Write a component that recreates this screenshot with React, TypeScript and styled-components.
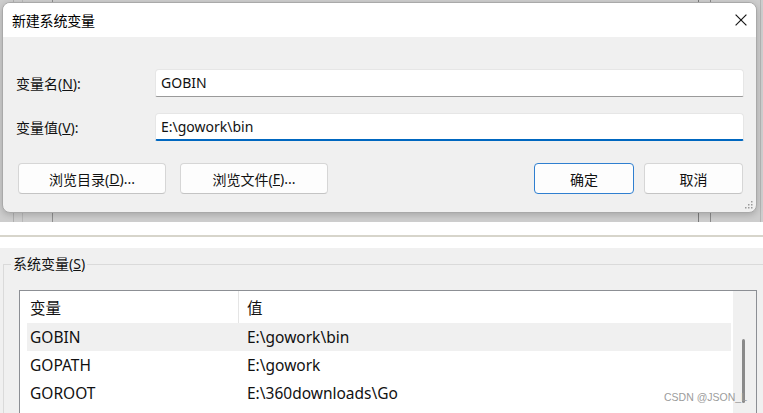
import React, { FC } from 'react'
import styled, { createGlobalStyle, css } from 'styled-components'

const uiFont = `"Noto Sans", "Noto Sans CJK SC", sans-serif`

const GlobalStyle = createGlobalStyle`
  html, body {
    margin: 0;
    padding: 0;
    background: #ffffff;
  }
  body {
    font-family: ${uiFont};
    color: #111111;
  }
  * {
    box-sizing: border-box;
  }
`

const Page = styled.div`
  position: relative;
  width: 763px;
  height: 413px;
  overflow: hidden;
  background: #ffffff;
`

// window content visible behind the dialog
const Backdrop = styled.div`
  height: 222px;
  padding: 2px 6px 9px 2px;
  background-color: #cdcdcd;
  background-image: linear-gradient(
    to right,
    transparent 13px,
    #b0b0b0 13px,
    #b0b0b0 14px,
    transparent 14px,
    transparent 22px,
    #b8b8b8 22px,
    #b8b8b8 23px,
    transparent 23px,
    transparent 52px,
    #8e8e8e 52px,
    #8e8e8e 53px,
    transparent 53px,
    transparent 698px,
    #7a7a7a 698px,
    #7a7a7a 699px,
    transparent 699px,
    transparent 710px,
    #8a8a8a 710px,
    #8a8a8a 711px,
    transparent 711px,
    transparent 760px,
    #b4b4b4 760px,
    #b4b4b4 761px,
    transparent 761px
  );
`

const Dialog = styled.div`
  position: relative;
  height: 100%;
  display: flex;
  flex-direction: column;
  background: #f0f0f0;
  border: 1px solid #a9a9a9;
  border-radius: 8px;
  overflow: hidden;
  box-shadow: 0 2px 6px rgba(0, 0, 0, 0.18);
`

const TitleBar = styled.div`
  height: 34px;
  flex-shrink: 0;
  display: flex;
  align-items: center;
  justify-content: space-between;
  padding: 0 9px 0 9px;
  background: #ffffff;
`

const Title = styled.span`
  font-size: 14px;
  color: #000000;
  letter-spacing: -0.2px;
`

const CloseIcon = styled.svg`
  width: 12px;
  height: 12px;
  display: block;
`

const DialogBody = styled.div`
  flex: 1;
  padding: 32px 12px 0 13px;
`

const FieldGrid = styled.div`
  display: grid;
  grid-template-columns: 139px 1fr;
  row-gap: 16px;
  align-items: center;
`

const FieldLabel = styled.div`
  font-size: 14px;
  color: #111111;
`

const TextBox = styled.div<{ focused?: boolean }>`
  height: 28px;
  display: flex;
  align-items: center;
  padding: 0 5px 2px;
  font-size: 14px;
  color: #111111;
  background: #ffffff;
  border: 1px solid #e6e6e6;
  border-bottom: 1px solid #9a9a9a;
  border-radius: 4px 4px 2px 2px;
  ${({ focused }) =>
    focused &&
    css`
      border-bottom: 2px solid #0067c0;
      padding-bottom: 1px;
    `}
`

const ButtonRow = styled.div`
  margin-top: 22px;
  display: flex;
  justify-content: space-between;
  padding: 0 1px 0 2px;
`

const ButtonGroup = styled.div<{ gap: number }>`
  display: flex;
  gap: ${({ gap }) => gap}px;
`

const Button = styled.div<{ width: number; primary?: boolean }>`
  width: ${({ width }) => width}px;
  height: 31px;
  display: flex;
  align-items: center;
  justify-content: center;
  font-size: 14px;
  color: #111111;
  background: #fdfdfd;
  border: 1px solid #d6d6d6;
  border-bottom-color: #c4c4c4;
  border-radius: 4px;
  ${({ primary }) =>
    primary &&
    css`
      border: 1px solid #2f7fd0;
    `}
`

const Grip = styled.svg`
  position: absolute;
  right: 3px;
  bottom: 3px;
  width: 9px;
  height: 9px;
`

const Divider = styled.div`
  background: #ffffff;
  padding: 13px 0 11px;
`

const DividerLine = styled.div`
  height: 2px;
  background: #d7d5cb;
`

const Panel = styled.div`
  height: 165px;
  background: #f0f0f0;
  padding: 5px 0 0 3px;
  overflow: hidden;
`

const GroupBox = styled.fieldset`
  margin: 0;
  min-width: 0;
  width: 800px;
  padding: 0 0 0 15px;
  border: 1px solid #dadada;
`

const GroupLegend = styled.legend`
  margin-left: -8px;
  padding: 0 2px;
  font-size: 14px;
  line-height: 22px;
  color: #111111;
`

const ListBox = styled.div`
  margin-top: 15px;
  width: 738px;
  height: 140px;
  display: flex;
  background: #ffffff;
  border: 1px solid #8c8f94;
`

const ListContent = styled.div`
  width: 711px;
  padding-left: 7px;
  margin-right: 2px;
`

const Row = styled.div<{ header?: boolean; selected?: boolean }>`
  display: grid;
  grid-template-columns: 212px 1fr;
  align-items: center;
  height: ${({ header }) => (header ? 32 : 28)}px;
  font-size: 15.5px;
  color: #111111;
  background: ${({ selected }) => (selected ? '#f0f0f0' : 'transparent')};
`

const Cell = styled.div<{ first?: boolean; divided?: boolean }>`
  height: 100%;
  display: flex;
  align-items: center;
  padding-left: ${({ first }) => (first ? 3 : 8)}px;
  white-space: nowrap;
  ${({ divided }) =>
    divided &&
    css`
      border-right: 1px solid #e5e5e5;
    `}
`

const ScrollTrack = styled.div`
  width: 23px;
  background: #f0f0f0;
  padding: 48px 0 0 9px;
`

const ScrollThumb = styled.div`
  width: 3px;
  height: 64px;
  border-radius: 2px;
  background: #8a8a8a;
`

const Watermark = styled.div`
  position: absolute;
  right: 16px;
  bottom: 10px;
  font-family: "Liberation Sans", Arial, sans-serif;
  font-size: 10.5px;
  color: #9c9c9c;
`

const variables = [
  { name: 'GOBIN', value: 'E:\\gowork\\bin', selected: true },
  { name: 'GOPATH', value: 'E:\\gowork' },
  { name: 'GOROOT', value: 'E:\\360downloads\\Go' },
]

const App: FC = () => {
  return (
    <Page>
      <GlobalStyle />
      <Backdrop>
        <Dialog>
          <TitleBar>
            <Title>新建系统变量</Title>
            <CloseIcon viewBox="0 0 12 12">
              <path d="M0.6 0.6 L11.4 11.4 M11.4 0.6 L0.6 11.4" stroke="#1a1a1a" strokeWidth="1.2" fill="none" />
            </CloseIcon>
          </TitleBar>
          <DialogBody>
            <FieldGrid>
              <FieldLabel>
                变量名(<u>N</u>):
              </FieldLabel>
              <TextBox>GOBIN</TextBox>
              <FieldLabel>
                变量值(<u>V</u>):
              </FieldLabel>
              <TextBox focused>E:\gowork\bin</TextBox>
            </FieldGrid>
            <ButtonRow>
              <ButtonGroup gap={14}>
                <Button width={148}>
                  浏览目录(<u>D</u>)...
                </Button>
                <Button width={148}>
                  浏览文件(<u>F</u>)...
                </Button>
              </ButtonGroup>
              <ButtonGroup gap={10}>
                <Button width={100} primary>
                  确定
                </Button>
                <Button width={99}>取消</Button>
              </ButtonGroup>
            </ButtonRow>
          </DialogBody>
          <Grip viewBox="0 0 9 9">
            <rect x="7" y="1" width="1.5" height="1.5" fill="#9a9a9a" />
            <rect x="4" y="4" width="1.5" height="1.5" fill="#9a9a9a" />
            <rect x="7" y="4" width="1.5" height="1.5" fill="#9a9a9a" />
            <rect x="1" y="7" width="1.5" height="1.5" fill="#9a9a9a" />
            <rect x="4" y="7" width="1.5" height="1.5" fill="#9a9a9a" />
            <rect x="7" y="7" width="1.5" height="1.5" fill="#9a9a9a" />
          </Grip>
        </Dialog>
      </Backdrop>
      <Divider>
        <DividerLine />
      </Divider>
      <Panel>
        <GroupBox>
          <GroupLegend>
            系统变量(<u>S</u>)
          </GroupLegend>
          <ListBox>
            <ListContent>
              <Row header>
                <Cell first divided>
                  变量
                </Cell>
                <Cell>值</Cell>
              </Row>
              {variables.map((v) => (
                <Row key={v.name} selected={v.selected}>
                  <Cell first>{v.name}</Cell>
                  <Cell>{v.value}</Cell>
                </Row>
              ))}
            </ListContent>
            <ScrollTrack>
              <ScrollThumb />
            </ScrollTrack>
          </ListBox>
        </GroupBox>
      </Panel>
      <Watermark>CSDN @JSON_L</Watermark>
    </Page>
  )
}

export default App
